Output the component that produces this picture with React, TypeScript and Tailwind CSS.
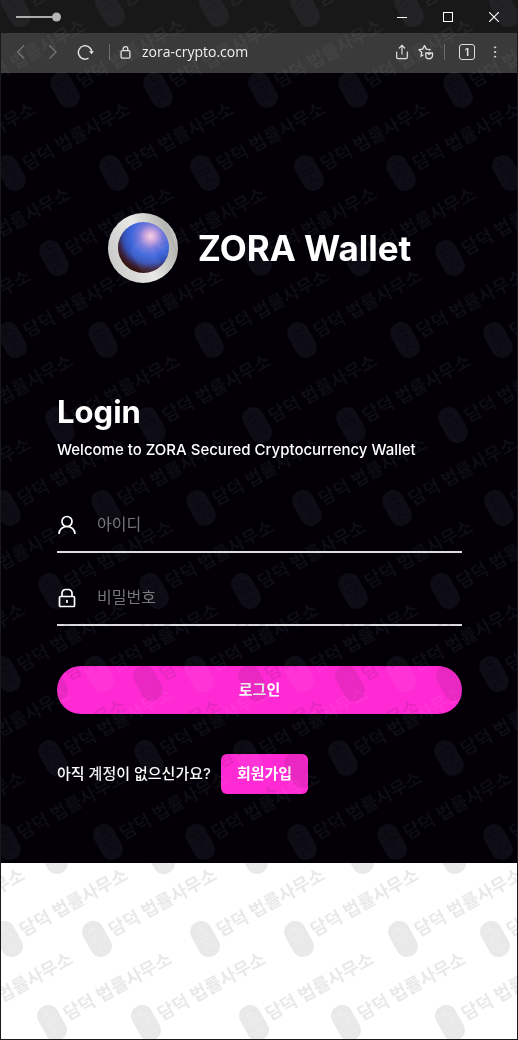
import React from 'react';
import { MoreVertical, Share } from 'lucide-react';

interface MarkRow {
    y: number;
    xs: number[];
}

// two stamp layers: the light one reads on dark surfaces, the dark one on bright surfaces
const lightRows: MarkRow[] = [
    { y: 9, xs: [15, 109, 213, 304, 408, 503] },
    { y: 90, xs: [-35, 64, 157, 262, 352, 457] },
    { y: 173, xs: [-85, 10, 113, 204, 308, 400, 506] },
    { y: 258, xs: [-50, 53, 145, 256, 355, 449] },
    { y: 340, xs: [-90, 11, 102, 208, 301, 404, 497] },
    { y: 425, xs: [-48, 59, 150, 256, 350, 452] },
    { y: 508, xs: [-90, 5, 105, 200, 306, 396, 498] },
    { y: 591, xs: [-48, 52, 153, 245, 352, 444] },
    { y: 674, xs: [-96, 5, 98, 198, 298, 400, 493] },
    { y: 758, xs: [-50, 52, 148, 247, 342, 448] },
    { y: 842, xs: [-96, 5, 107, 199, 301, 391, 497] },
];

const darkRows: MarkRow[] = [
    { y: 683, xs: [-48, 52, 147, 252, 349, 450] },
    { y: 770, xs: [5, 100, 204, 298, 402, 494] },
    { y: 856, xs: [-48, 52, 159, 252, 358, 450] },
    { y: 939, xs: [-96, 7, 96, 204, 298, 402, 494] },
    { y: 1023, xs: [-48, 51, 145, 253, 345, 449] },
];

const Marks: React.FC<{ rows: MarkRow[]; className: string }> = ({ rows, className }) => (
    <div aria-hidden="true" className={`pointer-events-none absolute inset-0 overflow-hidden ${className}`}>
        {rows.map(({ y, xs }) =>
            xs.map((x) => (
                <div
                    key={`${x}-${y}`}
                    className="absolute flex h-[38px] origin-[11px_19px] -rotate-[29deg] items-center gap-1 whitespace-nowrap"
                    style={{ left: x - 11, top: y - 19 }}
                >
                    <svg width="22" height="38" viewBox="0 0 22 38" fill="none">
                        <rect width="22" height="38" rx="11" fill="currentColor" opacity="0.700" />
                        <path
                            fillRule="evenodd"
                            fill="currentColor"
                            d="M11 0a11 11 0 0 1 11 11v16a11 11 0 0 1-22 0V11A11 11 0 0 1 11 0zM10.500 4v4l-5 2v.7l5.200-1.600 5.800 1.600V10l-5.300-2V4zM6 15v5h10v-5zm.7.700h8.600v3.600H6.700zM10.500 22v4l-5 4 .5.500 5-4 5 4 .5-.5-5.300-4v-4z"
                        />
                    </svg>
                    <span className="text-[18px] leading-6 font-bold">담덕 법률사무소</span>
                </div>
            )),
        )}
    </div>
);

const TitleBar: React.FC = () => (
    <div className="flex h-[33px] items-center justify-between bg-[#181818] pl-[15px] text-white">
        <svg width="46" height="10" viewBox="0 0 46 10">
            <path d="M0 5h40" stroke="#aaa" strokeWidth="2" />
            <circle cx="40.500" cy="5" r="4.500" fill="#b4b4b4" />
        </svg>
        <div className="flex">
            <button aria-label="Minimize" className="flex h-[33px] w-[46px] items-center justify-center">
                <svg width="10" height="10" stroke="currentColor" fill="none"><path d="M0 5.500h10" /></svg>
            </button>
            <button aria-label="Maximize" className="flex h-[33px] w-[46px] items-center justify-center">
                <svg width="10" height="10" stroke="currentColor" fill="none"><rect x="0.500" y="0.500" width="9" height="9" /></svg>
            </button>
            <button aria-label="Close" className="flex h-[33px] w-[46px] items-center justify-center">
                <svg width="10" height="10" stroke="currentColor" fill="none" strokeWidth="1.200"><path d="M0 0l10 10M10 0L0 10" /></svg>
            </button>
        </div>
    </div>
);

const AddressBar: React.FC = () => (
    <div className="flex h-10 items-center bg-[#3a3a3a] pr-3.5 pb-0.5 pl-[15px] text-[#dedede]">
        <button aria-label="Back" className="text-[#747474]">
            <svg width="10" height="16" fill="none" stroke="currentColor" strokeWidth="1.300"><path d="M8 1.500L1.500 8l6.500 6.500" /></svg>
        </button>
        <button aria-label="Forward" className="ml-[22px] text-[#747474]">
            <svg width="10" height="16" fill="none" stroke="currentColor" strokeWidth="1.300"><path d="M1.500 1.500L8 8l-6.500 6.500" /></svg>
        </button>
        <button aria-label="Reload" className="ml-[19px]">
            <svg width="17" height="17" viewBox="0 0 17 17" fill="none" stroke="currentColor" strokeWidth="1.500">
                <path d="M11.500 14.200A6.700 6.700 0 1 1 14.800 8" />
                <path d="M12 7.200h5l-2.500 3z" fill="currentColor" stroke="none" />
            </svg>
        </button>
        <span className="ml-[15px] h-4 w-px bg-[#6a6a6a]" />
        <svg className="ml-2.5" width="11" height="13" viewBox="0 0 11 13" fill="none" stroke="currentColor" strokeWidth="1.300">
            <rect x="1.100" y="4.600" width="8.800" height="7.600" rx="1.200" />
            <path d="M3.200 4.500V3a2.300 2.300 0 0 1 4.600 0v1.500" />
        </svg>
        <span className="ml-[11px] flex-1 font-['Open_Sans','Noto_Sans',sans-serif] text-sm text-[#f0f0f0]">zora-crypto.com</span>
        <button aria-label="Share"><Share size={16} strokeWidth={1.8} /></button>
        <button aria-label="Favorites" className="ml-2">
            <svg width="16" height="16" viewBox="0 0 16 16" fill="none" stroke="currentColor" strokeWidth="1.300" strokeLinejoin="round">
                <path d="M5.300 10.800L3 12.300l.7-4L1 5.700l3.700-.6L6.500 1.500l1.800 3.600 3.700.6-.8.800" />
                <path d="M7.800 9h6.700v2.400a3.350 3.350 0 0 1-6.700 0z" />
                <path d="M9.600 9l1.500 1.400L12.700 9" />
            </svg>
        </button>
        <span className="ml-2.5 h-4 w-px bg-[#6a6a6a]" />
        <button aria-label="Tabs" className="ml-3.5 flex size-4 items-center justify-center rounded-[3px] border border-current text-[10px] leading-3 font-bold">1</button>
        <button aria-label="Menu" className="ml-3"><MoreVertical size={16} strokeWidth={1.5} /></button>
    </div>
);

const Logo: React.FC = () => (
    <svg width="70" height="70" viewBox="0 0 70 70">
        <defs>
            <linearGradient id="ring" x1="0" y1="0.700" x2="1" y2="0.300">
                <stop offset="0" stopColor="#c8c8c6" />
                <stop offset="0.250" stopColor="#d8d8d6" />
                <stop offset="0.500" stopColor="#e8e8e6" />
                <stop offset="0.750" stopColor="#c6c6c3" />
                <stop offset="0.900" stopColor="#b4b4b0" />
                <stop offset="1" stopColor="#d0d0cd" />
            </linearGradient>
            <radialGradient id="ball" cx="0.640" cy="0.280" r="0.850">
                <stop offset="0" stopColor="#f6cfe0" />
                <stop offset="0.120" stopColor="#cfa9de" />
                <stop offset="0.280" stopColor="#7478da" />
                <stop offset="0.460" stopColor="#3d66dc" />
                <stop offset="0.620" stopColor="#3452b8" />
                <stop offset="0.750" stopColor="#3a2444" />
                <stop offset="0.860" stopColor="#34120c" />
                <stop offset="1" stopColor="#1c0806" />
            </radialGradient>
        </defs>
        <circle cx="35" cy="35" r="35" fill="url(#ring)" />
        <circle cx="35.500" cy="34.500" r="25.500" fill="url(#ball)" />
    </svg>
);

const fieldStyle = 'flex h-[73px] items-center border-b-2 border-[#dcdcde] pt-4';
const inputStyle = 'min-w-0 flex-1 bg-transparent text-base leading-6 text-white outline-none placeholder:text-[#757575]';

const LoginForm: React.FC = () => (
    <form className="mt-[107px]" onSubmit={(e) => e.preventDefault()}>
        <h2 className="text-[31px] leading-[44px] font-bold">Login</h2>
        <p className="mt-1 text-[15px] leading-6 font-medium">Welcome to ZORA Secured Cryptocurrency Wallet</p>
        <div className="mt-[18px]">
            <div className={fieldStyle}>
                <label htmlFor="user-id" className="w-10 pt-0.5" aria-label="아이디">
                    <svg width="20" height="20" viewBox="0 0 20 20" fill="none" stroke="currentColor" strokeWidth="1.700">
                        <circle cx="10" cy="6.500" r="5" />
                        <path d="M2 19c0-4.500 3.500-7.500 8-7.500s8 3 8 7.500" />
                    </svg>
                </label>
                <input id="user-id" type="text" placeholder="아이디" className={inputStyle} />
            </div>
            <div className={fieldStyle}>
                <label htmlFor="user-pw" className="w-10 pt-0.5" aria-label="비밀번호">
                    <svg width="20" height="20" viewBox="0 0 20 20" fill="none" stroke="currentColor" strokeWidth="1.700">
                        <rect x="2.500" y="8.500" width="15" height="10" rx="1" />
                        <path d="M5 8.500V5a3.500 3.500 0 0 1 3.500-3.500h3A3.500 3.500 0 0 1 15 5v3.500M10 12v3" />
                    </svg>
                </label>
                <input id="user-pw" type="password" placeholder="비밀번호" className={inputStyle} />
            </div>
        </div>
        <button type="submit" className="mt-10 h-12 w-full rounded-full bg-[#ff2ad4] text-[15px] font-bold">로그인</button>
        <div className="mt-10 flex items-center gap-2.5">
            <span className="text-[15px] font-medium">아직 계정이 없으신가요?</span>
            <button type="button" className="h-10 rounded-md bg-[#ff2ad4] px-4 text-[15px] font-bold">회원가입</button>
        </div>
    </form>
);

export default function App() {
    return (
        <div className="relative isolate flex min-h-screen flex-col border-x border-b border-[#1a1a1a] bg-white font-['Inter','Noto_Sans_CJK_KR',sans-serif] text-white">
            <TitleBar />
            <AddressBar />
            <main className="bg-[#020006] pt-[140px] pr-[55px] pb-[69px] pl-14">
                <div className="flex items-center justify-center gap-5">
                    <Logo />
                    <h1 className="text-[35px] leading-10 font-bold">ZORA Wallet</h1>
                </div>
                <LoginForm />
            </main>
            <Marks rows={lightRows} className="text-[#0c0c0e] mix-blend-screen" />
            <Marks rows={darkRows} className="text-[#e9e9e9] mix-blend-multiply" />
        </div>
    );
}
